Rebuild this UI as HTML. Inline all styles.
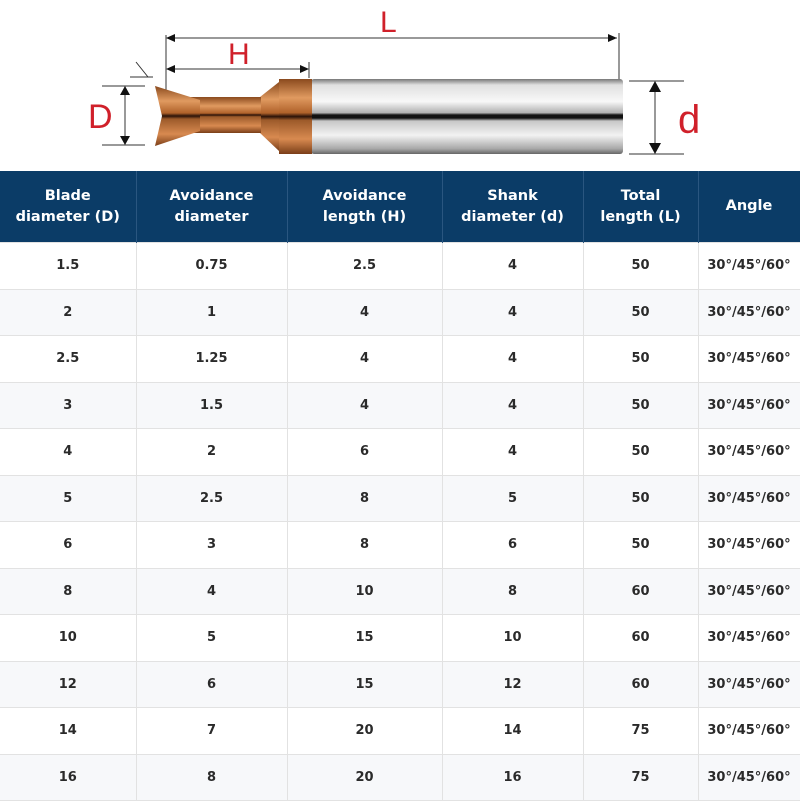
<!DOCTYPE html>
<html><head><meta charset="utf-8"><style>
body{margin:0;width:800px;height:800px;overflow:hidden;background:#fff;font-family:"DejaVu Sans","Liberation Sans",sans-serif;}
svg{position:absolute;left:0;top:0}
table{position:absolute;left:0;top:171px;width:800px;border-collapse:collapse;table-layout:fixed}
th{background:#0b3c67;color:#fff;font-size:14.5px;font-weight:bold;height:71px;padding:0;line-height:21px;border-right:1px solid #2a5680;letter-spacing:0}
td{height:45.5px;padding:0;text-align:center;font-size:13px;font-weight:bold;color:#2a2a2a;border:1px solid #e2e2e2;border-left:none}
tr:nth-child(odd) td{background:#f7f8fa}
</style></head><body>
<svg width="800" height="171" viewBox="0 0 800 171">
<defs>
<linearGradient id="sh" x1="0" y1="0" x2="0" y2="1">
<stop offset="0" stop-color="#777"/><stop offset="0.08" stop-color="#e0e0e0"/><stop offset="0.3" stop-color="#f8f8f8"/><stop offset="0.45" stop-color="#b0b0b0"/><stop offset="0.48" stop-color="#111"/><stop offset="0.52" stop-color="#111"/><stop offset="0.56" stop-color="#c8c8c8"/><stop offset="0.75" stop-color="#f2f2f2"/><stop offset="0.93" stop-color="#a8a8a8"/><stop offset="1" stop-color="#666"/>
</linearGradient>
<linearGradient id="cu" x1="0" y1="0" x2="0" y2="1">
<stop offset="0" stop-color="#8a4a1e"/><stop offset="0.25" stop-color="#e09a60"/><stop offset="0.45" stop-color="#b0622a"/><stop offset="0.5" stop-color="#2a1208"/><stop offset="0.55" stop-color="#9c5a2a"/><stop offset="0.8" stop-color="#d88a50"/><stop offset="1" stop-color="#7a3e18"/>
</linearGradient>
</defs>
<g stroke="#333" stroke-width="1" fill="#111">
<line x1="166" y1="35" x2="166" y2="97"/><line x1="619" y1="33" x2="619" y2="86"/><line x1="309" y1="62" x2="309" y2="78"/>
<line x1="168" y1="38" x2="617" y2="38"/><path d="M166 38 l9 -4 v8z M617 38 l-9 -4 v8z" stroke="none"/>
<line x1="168" y1="69" x2="307" y2="69"/><path d="M166 69 l9 -4 v8z M309 69 l-9 -4 v8z" stroke="none"/>
<line x1="102" y1="86" x2="145" y2="86"/><line x1="102" y1="145" x2="145" y2="145"/>
<line x1="125" y1="90" x2="125" y2="141"/><path d="M125 86 l-5 9 h10z M125 145 l-5 -9 h10z" stroke="none"/>
<line x1="629" y1="81" x2="684" y2="81"/><line x1="629" y1="154" x2="684" y2="154"/>
<line x1="655" y1="85" x2="655" y2="150"/><path d="M655 81 l-6 11 h12z M655 154 l-6 -11 h12z" stroke="none"/>
<path d="M130 77 h23 M136 62 l12 15" fill="none"/>
</g>
<rect x="311" y="79" width="312" height="75" rx="3" fill="url(#sh)"/>
<path d="M260 97 L279 82 L279 151 L260 133z" fill="url(#cu)"/>
<rect x="279" y="79" width="33" height="75" fill="url(#cu)"/>
<rect x="185" y="97" width="76" height="36" fill="url(#cu)"/>
<path d="M155 86 L200 100 L200 131 L155 146 L162 116z" fill="url(#cu)"/>
<text x="88" y="128" font-family="Liberation Sans" font-size="34" fill="#d0202a">D</text>
<text x="678" y="133" font-family="Liberation Sans" font-size="40" fill="#d0202a">d</text>
<text x="228" y="64" font-family="Liberation Sans" font-size="30" fill="#d0202a">H</text>
<text x="380" y="32" font-family="Liberation Sans" font-size="30" fill="#d0202a">L</text>
</svg>
<table>
<colgroup><col style="width:136px"><col style="width:151px"><col style="width:155px"><col style="width:141px"><col style="width:115px"><col style="width:102px"></colgroup>
<tr><th>Blade<br>diameter (D)</th><th>Avoidance<br>diameter</th><th>Avoidance<br>length (H)</th><th>Shank<br>diameter (d)</th><th>Total<br>length (L)</th><th>Angle</th></tr>
<tr><td>1.5</td><td>0.75</td><td>2.5</td><td>4</td><td>50</td><td>30°/45°/60°</td></tr>
<tr><td>2</td><td>1</td><td>4</td><td>4</td><td>50</td><td>30°/45°/60°</td></tr>
<tr><td>2.5</td><td>1.25</td><td>4</td><td>4</td><td>50</td><td>30°/45°/60°</td></tr>
<tr><td>3</td><td>1.5</td><td>4</td><td>4</td><td>50</td><td>30°/45°/60°</td></tr>
<tr><td>4</td><td>2</td><td>6</td><td>4</td><td>50</td><td>30°/45°/60°</td></tr>
<tr><td>5</td><td>2.5</td><td>8</td><td>5</td><td>50</td><td>30°/45°/60°</td></tr>
<tr><td>6</td><td>3</td><td>8</td><td>6</td><td>50</td><td>30°/45°/60°</td></tr>
<tr><td>8</td><td>4</td><td>10</td><td>8</td><td>60</td><td>30°/45°/60°</td></tr>
<tr><td>10</td><td>5</td><td>15</td><td>10</td><td>60</td><td>30°/45°/60°</td></tr>
<tr><td>12</td><td>6</td><td>15</td><td>12</td><td>60</td><td>30°/45°/60°</td></tr>
<tr><td>14</td><td>7</td><td>20</td><td>14</td><td>75</td><td>30°/45°/60°</td></tr>
<tr><td>16</td><td>8</td><td>20</td><td>16</td><td>75</td><td>30°/45°/60°</td></tr>
</table>
</body></html>
